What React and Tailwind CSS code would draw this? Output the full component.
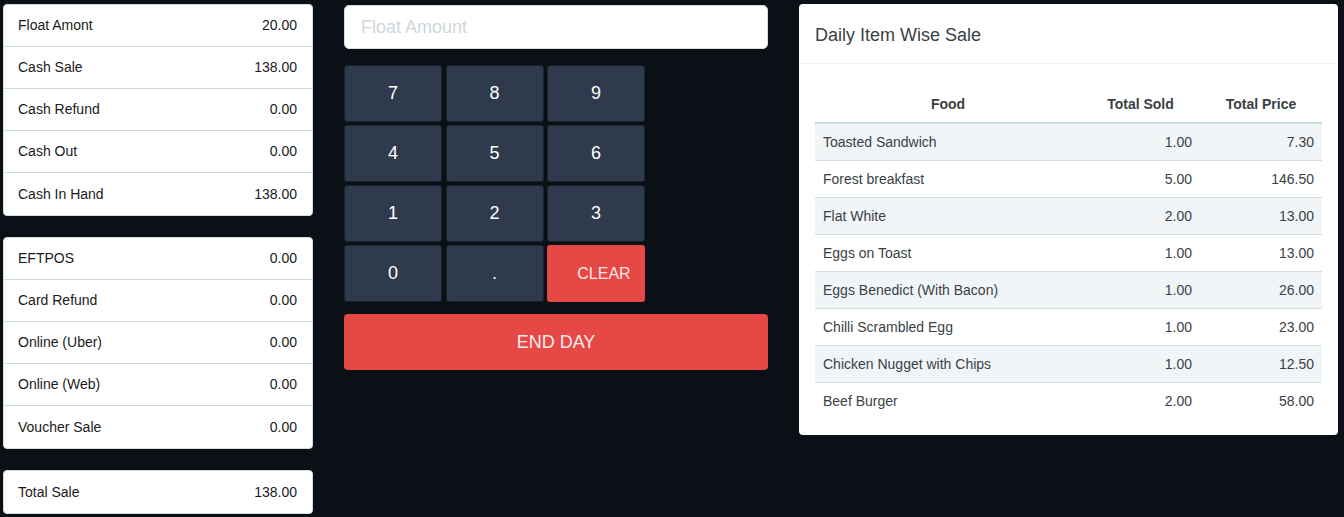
import React from 'react';

const cashRows = [
  ['Float Amont', '20.00'],
  ['Cash Sale', '138.00'],
  ['Cash Refund', '0.00'],
  ['Cash Out', '0.00'],
  ['Cash In Hand', '138.00'],
];

const cardRows = [
  ['EFTPOS', '0.00'],
  ['Card Refund', '0.00'],
  ['Online (Uber)', '0.00'],
  ['Online (Web)', '0.00'],
  ['Voucher Sale', '0.00'],
];

const items = [
  ['Toasted Sandwich', '1.00', '7.30'],
  ['Forest breakfast', '5.00', '146.50'],
  ['Flat White', '2.00', '13.00'],
  ['Eggs on Toast', '1.00', '13.00'],
  ['Eggs Benedict (With Bacon)', '1.00', '26.00'],
  ['Chilli Scrambled Egg', '1.00', '23.00'],
  ['Chicken Nugget with Chips', '1.00', '12.50'],
  ['Beef Burger', '2.00', '58.00'],
];

const keys = ['7', '8', '9', '4', '5', '6', '1', '2', '3', '0', '.'];

const SummaryCard = ({ rows }) => (
  <div className="bg-white rounded-[4px] border border-[#d3dede] overflow-hidden">
    {rows.map(([label, value]) => (
      <div
        key={label}
        className="h-[42px] flex items-center justify-between pl-[14px] pr-[15px] text-[14px] text-[#1a1a1a] border-b border-[#cfdcdc] last:border-b-0"
      >
        <span>{label}</span>
        <span>{value}</span>
      </div>
    ))}
  </div>
);

export default function App() {
  return (
    <div
      className="min-h-screen w-full bg-[#0a1016] flex items-start gap-[31px] pl-[3px] pt-[4px]"
      style={{ fontFamily: '"Liberation Sans", Arial, sans-serif' }}
    >
      {/* Left summary */}
      <div className="w-[310px] flex flex-col gap-[21px]">
        <SummaryCard rows={cashRows} />
        <SummaryCard rows={cardRows} />
        <SummaryCard rows={[['Total Sale', '138.00']]} />
      </div>

      {/* Keypad */}
      <div className="w-[424px] flex flex-col pt-[1px]">
        <input
          type="text"
          placeholder="Float Amount"
          className="h-[44px] w-full bg-white rounded-[5px] border border-[#cfe0e0] px-[16px] text-[18px] text-[#333] placeholder:text-[#cfd6db] outline-none"
        />
        <div className="grid grid-cols-[98px_98px_98px] gap-x-[3.5px] gap-y-[3px] mt-[16px]">
          {keys.map((k) => (
            <button
              key={k}
              className="h-[57px] rounded-[3px] bg-[#2f3b4c] border border-[#16232a] text-white text-[18px]"
            >
              {k}
            </button>
          ))}
          <button className="h-[57px] rounded-[3px] bg-[#e64845] text-[#fbe9e9] text-[16px] pl-[16px]">
            CLEAR
          </button>
        </div>
        <button className="mt-[12px] h-[56px] w-full rounded-[4px] bg-[#e64845] text-[#fbecec] text-[18px]">
          END DAY
        </button>
      </div>

      {/* Daily item wise sale */}
      <div className="w-[539px] bg-white rounded-[4px] pb-[16px]">
        <div className="h-[60px] flex items-center px-[16px] pt-[3px] border-b border-[#eef2f3] text-[18px] text-[#3a3f45]">
          Daily Item Wise Sale
        </div>
        <div className="px-[16px] pt-[18px]">
          <table className="w-full border-collapse text-[14px] text-[#3a3f45]">
            <thead>
              <tr className="border-b-2 border-[#c9dcdc]">
                <th className="w-[266px] pt-[12px] pb-[8px] leading-5 font-bold text-center">Food</th>
                <th className="w-[119px] pt-[12px] pb-[8px] leading-5 font-bold text-center">Total Sold</th>
                <th className="pt-[12px] pb-[8px] leading-5 font-bold text-center">Total Price</th>
              </tr>
            </thead>
            <tbody>
              {items.map(([name, sold, price], i) => (
                <tr
                  key={name}
                  className={`border-b border-[#d2e0e0] last:border-b-0 ${i % 2 === 0 ? 'bg-[#f2f5f8]' : 'bg-white'}`}
                >
                  <td className="py-[8px] px-[8px] leading-5 text-left">{name}</td>
                  <td className="py-[8px] px-[8px] leading-5 text-right">{sold}</td>
                  <td className="py-[8px] px-[8px] leading-5 text-right">{price}</td>
                </tr>
              ))}
            </tbody>
          </table>
        </div>
      </div>
    </div>
  );
}
